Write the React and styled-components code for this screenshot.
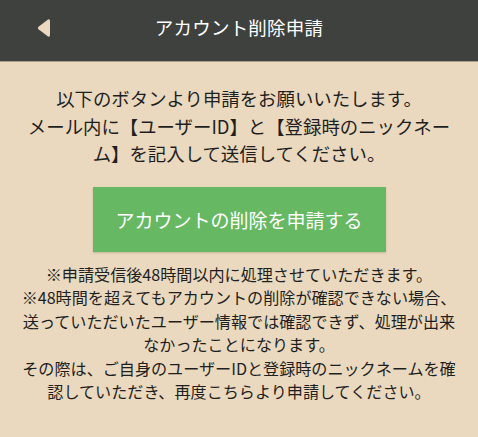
import React from "react";
import styled, { createGlobalStyle } from "styled-components";

const Global = createGlobalStyle`
  html, body { margin: 0; padding: 0; background: #ead9be; }
  body { font-family: "Noto Sans CJK JP", "Noto Sans", sans-serif; }
`;

const Page = styled.div`
  width: 478px;
  min-height: 437px;
  background: #ead9be;
`;

const Header = styled.header`
  position: relative;
  height: 61px;
  background: #3f413f;
  border-bottom: 1px solid #a89e8e;
  display: flex;
  align-items: center;
  justify-content: center;
`;

const Back = styled.button`
  position: absolute;
  left: 36px;
  top: 18px;
  width: 16px;
  height: 20px;
  padding: 0;
  border: 0;
  background: none;
  display: flex;
`;

const Title = styled.h1`
  margin: 0;
  margin-top: -8px;
  color: #ffffff;
  font-size: 18.5px;
  font-weight: 400;
  letter-spacing: 0.2px;
`;

const Content = styled.main`
  display: flex;
  flex-direction: column;
  align-items: center;
  padding: 23px 20px 0;
`;

const Lead = styled.p`
  margin: 0;
  font-size: 18.4px;
  line-height: 27.5px;
  color: #1f1f1f;
  text-align: center;
`;

const DeleteButton = styled.button`
  margin-top: 19px;
  width: 293px;
  height: 65px;
  border: 0;
  background: #66b862;
  color: #ffffff;
  font-family: inherit;
  font-size: 19px;
  font-weight: 400;
  box-shadow: 0 1px 2px rgba(0, 0, 0, 0.18);
  cursor: pointer;
`;

const Notes = styled.div`
  margin-top: 11px;
  width: 438px;
  font-size: 16.1px;
  line-height: 23.6px;
  color: #1f1f1f;
  text-align: center;
`;

const NoteLine = styled.p`
  margin: 0;
`;

export default function App() {
  return (
    <Page>
      <Global />
      <Header>
        <Back aria-label="戻る">
          <svg width="16" height="20" viewBox="0 0 16 20">
            <path
              d="M12 1.5 Q14 0.8 14 3 L14 17 Q14 19.2 12 18.5 L2.5 11.3 Q1 10 2.5 8.7 Z"
              fill="#ead9be"
            />
          </svg>
        </Back>
        <Title>アカウント削除申請</Title>
      </Header>
      <Content>
        <Lead>
          以下のボタンより申請をお願いいたします。
          <br />
          メール内に【ユーザーID】と【登録時のニックネー
          <br />
          ム】を記入して送信してください。
        </Lead>
        <DeleteButton>アカウントの削除を申請する</DeleteButton>
        <Notes>
          <NoteLine>※申請受信後48時間以内に処理させていただきます。</NoteLine>
          <NoteLine>
            ※48時間を超えてもアカウントの削除が確認できない場合、
            <br />
            送っていただいたユーザー情報では確認できず、処理が出来
            <br />
            なかったことになります。
          </NoteLine>
          <NoteLine>
            その際は、ご自身のユーザーIDと登録時のニックネームを確
            <br />
            認していただき、再度こちらより申請してください。
          </NoteLine>
        </Notes>
      </Content>
    </Page>
  );
}
